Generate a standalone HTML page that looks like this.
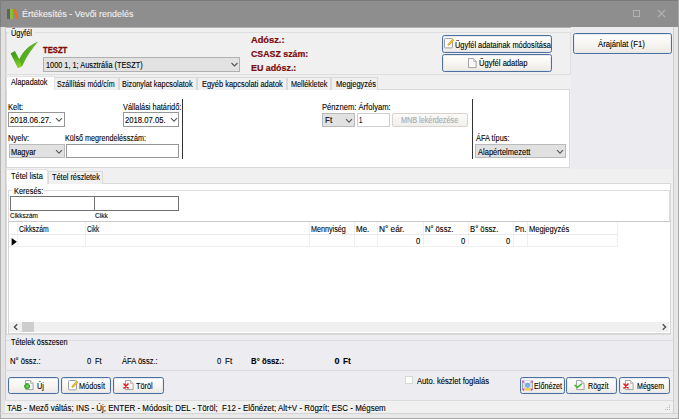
<!DOCTYPE html>
<html><head><meta charset="utf-8"><style>
html,body{margin:0;padding:0;width:679px;height:419px;overflow:hidden;background:#f0f0f0}
.a{position:absolute}
.t{font-family:"Liberation Sans",sans-serif;line-height:20px;white-space:pre;transform-origin:0 0;-webkit-text-stroke:0.1px currentColor}
</style></head><body>
<div class="a" style="left:0px;top:0px;width:679px;height:419px;background:#f0f0f0"></div>
<div class="a" style="left:0px;top:0px;width:679px;height:27px;background:#8e8e8e"></div>
<div class="a" style="left:0px;top:27px;width:679px;height:1px;background:#b4b4b4"></div>
<div class="a" style="left:0px;top:0px;width:679px;height:1px;background:#7a7a7a"></div>
<div class="a" style="left:0px;top:0px;width:1px;height:27px;background:#7e7e7e"></div>
<div class="a" style="left:7.3px;top:9px;width:2.500000000000001px;height:10px;background:#616161"></div>
<div class="a" style="left:10.2px;top:9px;width:2.4000000000000004px;height:10px;background:#86bf3c"></div>
<svg class="a" style="left:0;top:0" width="30" height="27"><polygon points="13.4,9 15.9,9 18.4,19 15.9,19" fill="#f26b1d"/></svg>
<div class="a t" style="left:21.70px;top:3.90px;font-size:9.8px;color:#f2f2f2;transform:scaleX(0.9133);">Értékesítés - Vevői rendelés</div>
<div class="a" style="left:633px;top:10px;width:7px;height:7px;border:1px solid #b2b2b2;box-sizing:border-box"></div>
<svg class="a" style="left:650px;top:3px" width="22" height="22"><path d="M8 7 L15 14 M15 7 L8 14" stroke="#b2b2b2" stroke-width="1.1"/></svg>
<div class="a" style="left:0px;top:27px;width:1px;height:392px;background:#b2b2b2"></div>
<div class="a" style="left:1px;top:27px;width:4px;height:392px;background:#e4e4e4"></div>
<div class="a" style="left:5px;top:27px;width:1px;height:386px;background:#cdcdcd"></div>
<div class="a" style="left:673px;top:27px;width:1px;height:386px;background:#d0d0d0"></div>
<div class="a" style="left:674px;top:27px;width:4px;height:392px;background:#e6e6e6"></div>
<div class="a" style="left:678px;top:0px;width:1px;height:419px;background:#a8a8a8"></div>
<div class="a" style="left:0px;top:413px;width:678px;height:1px;background:#d4d4d4"></div>
<div class="a" style="left:1px;top:414px;width:677px;height:4px;background:#e8e8e8"></div>
<div class="a" style="left:0px;top:418px;width:679px;height:1px;background:#a8a8a8"></div>
<div class="a" style="left:6px;top:335px;width:667px;height:65px;background:#ededf1"></div>
<div class="a" style="left:571px;top:27px;width:102px;height:142px;background:#ececf0"></div>
<div class="a" style="left:6px;top:32px;width:565px;height:43px;border:1px solid #dedede;box-sizing:border-box"></div>
<div class="a" style="left:9px;top:29px;width:26px;height:8px;background:#f0f0f0"></div>
<div class="a t" style="left:11.00px;top:22.95px;font-size:8.5px;color:#000;transform:scaleX(0.8676);">Ügyfél</div>
<svg class="a" style="left:8px;top:38px" width="34" height="34" viewBox="0 0 34 34"><defs><linearGradient id="g1" x1="0" y1="0" x2="0.35" y2="1"><stop offset="0" stop-color="#1f7a12"/><stop offset="0.55" stop-color="#4aa51e"/><stop offset="1" stop-color="#94d62c"/></linearGradient><linearGradient id="g2" x1="0" y1="1" x2="1" y2="0"><stop offset="0" stop-color="#3a9a18"/><stop offset="1" stop-color="#8acb3a"/></linearGradient></defs><path d="M2.6 15.6 L6.9 13 L11.3 21.3 C15 13.5 21 7.5 29.8 3.8 C24.5 10 19 17.5 14 28.5 L9.9 30.3 Z" fill="url(#g1)"/><path d="M11.3 21.3 C15 13.5 21 7.5 29.8 3.8 C24.5 10 19 17.5 14 28.5 Z" fill="url(#g2)" opacity="0.6"/></svg>
<div class="a t" style="left:43.20px;top:39.72px;font-size:8.6px;color:#7e0a0a;font-weight:bold;transform:scaleX(0.8905);-webkit-text-stroke:0.3px #7e0a0a">TESZT</div>
<div class="a" style="left:42.7px;top:56.8px;width:197.60000000000002px;height:15.0px;background:#e2e2e2;border:1px solid #b0b0b0;box-sizing:border-box"></div>
<div class="a t" style="left:45.80px;top:54.95px;font-size:8.5px;color:#000;transform:scaleX(0.8632);">1000 1, 1; Ausztrália (TESZT)</div>
<svg class="a" style="left:229.5px;top:60.8px" width="10" height="8"><path d="M1.5 2 L4.5 5 L7.5 2" stroke="#555" fill="none" stroke-width="1.1"/></svg>
<div class="a t" style="left:250.70px;top:29.98px;font-size:9px;color:#7a0b0b;font-weight:bold;transform:scaleX(1.0308);-webkit-text-stroke:0.2px #7a0b0b">Adósz.:</div>
<div class="a t" style="left:250.70px;top:44.18px;font-size:9px;color:#7a0b0b;font-weight:bold;transform:scaleX(0.9775);-webkit-text-stroke:0.2px #7a0b0b">CSASZ szám:</div>
<div class="a t" style="left:250.70px;top:57.58px;font-size:9px;color:#7a0b0b;font-weight:bold;transform:scaleX(0.9846);-webkit-text-stroke:0.2px #7a0b0b">EU adósz.:</div>
<div class="a" style="left:442.3px;top:35.2px;width:109.49999999999994px;height:17.4px;border:1.4px solid #4b6f9e;border-radius:2.5px;box-sizing:border-box;background:linear-gradient(#ffffff,#f8f6f3 50%,#ede9e4);box-shadow:inset 0 0 0 0.7px #dfe5ec"></div>
<div class="a" style="left:442.3px;top:54.3px;width:109.49999999999994px;height:17.60000000000001px;border:1.4px solid #4b6f9e;border-radius:2.5px;box-sizing:border-box;background:linear-gradient(#ffffff,#f8f6f3 50%,#ede9e4);box-shadow:inset 0 0 0 0.7px #dfe5ec"></div>
<div class="a" style="left:572.8px;top:33px;width:99.10000000000002px;height:21.200000000000003px;border:1.4px solid #4b6f9e;border-radius:2.5px;box-sizing:border-box;background:linear-gradient(#ffffff,#f8f6f3 50%,#ede9e4);box-shadow:inset 0 0 0 0.7px #dfe5ec"></div>
<svg class="a" style="left:443px;top:37.2px" width="12" height="12" viewBox="-1 -1 12 12"><rect x="0.5" y="0.5" width="8" height="9.4" rx="1" fill="#fafafa" stroke="#a0a0a0" stroke-width="1"/><path d="M4.2 5.9 L8.7 1.1 L9.9 2.2 L5.4 7 L4 7.3 Z" fill="#f2c23a" stroke="#c88a10" stroke-width="0.6"/></svg>
<div class="a t" style="left:454.90px;top:34.65px;font-size:8.5px;color:#000;transform:scaleX(0.8736);">Ügyfél adatainak módosítása</div>
<svg class="a" style="left:466.5px;top:57px" width="10.6" height="12.1" viewBox="-1 -1 10.6 12.1"><path d="M0.5 0.5 H5.6 L8.1 3.5 V9.6 H0.5 Z" fill="#f9f9f9" stroke="#a3a3a3" stroke-width="1" stroke-linejoin="round"/><path d="M5.6 0.5 V3.5 H8.1" fill="#e6e6e6" stroke="#b0b0b0" stroke-width="0.8"/></svg>
<div class="a t" style="left:478.80px;top:53.15px;font-size:8.5px;color:#000;transform:scaleX(0.8935);">Ügyfél adatlap</div>
<div class="a t" style="left:598.10px;top:34.15px;font-size:8.5px;color:#000;transform:scaleX(0.9079);">Árajánlat (F1)</div>
<div class="a" style="left:5.5px;top:89px;width:564.0px;height:79px;background:#fff;border:1px solid #d9d9d9;box-sizing:border-box"></div>
<div class="a" style="left:54px;top:77px;width:64.5px;height:12.5px;background:#f0f0f0;border:1px solid #d9d9d9;border-bottom:none;box-sizing:border-box"></div>
<div class="a t" style="left:56.60px;top:73.55px;font-size:8.5px;color:#000;transform:scaleX(0.8362);">Szállítási mód/cím</div>
<div class="a" style="left:118.5px;top:77px;width:78.69999999999999px;height:12.5px;background:#f0f0f0;border:1px solid #d9d9d9;border-bottom:none;box-sizing:border-box"></div>
<div class="a t" style="left:122.40px;top:73.55px;font-size:8.5px;color:#000;transform:scaleX(0.8632);">Bizonylat kapcsolatok</div>
<div class="a" style="left:197.2px;top:77px;width:89.69999999999999px;height:12.5px;background:#f0f0f0;border:1px solid #d9d9d9;border-bottom:none;box-sizing:border-box"></div>
<div class="a t" style="left:201.60px;top:73.55px;font-size:8.5px;color:#000;transform:scaleX(0.8763);">Egyéb kapcsolati adatok</div>
<div class="a" style="left:286.9px;top:77px;width:44.10000000000002px;height:12.5px;background:#f0f0f0;border:1px solid #d9d9d9;border-bottom:none;box-sizing:border-box"></div>
<div class="a t" style="left:291.00px;top:73.55px;font-size:8.5px;color:#000;transform:scaleX(0.8552);">Mellékletek</div>
<div class="a" style="left:331px;top:77px;width:47px;height:12.5px;background:#f0f0f0;border:1px solid #d9d9d9;border-bottom:none;box-sizing:border-box"></div>
<div class="a t" style="left:335.70px;top:73.55px;font-size:8.5px;color:#000;transform:scaleX(0.8802);">Megjegyzés</div>
<div class="a" style="left:5.5px;top:75.7px;width:49.0px;height:14.299999999999997px;background:#fff;border:1px solid #e2e2e2;border-bottom:none;box-sizing:border-box"></div>
<div class="a t" style="left:11.20px;top:72.35px;font-size:8.5px;color:#000;transform:scaleX(0.8571);">Alapadatok</div>
<div class="a t" style="left:8.10px;top:96.55px;font-size:8.5px;color:#000;transform:scaleX(0.8951);">Kelt:</div>
<div class="a" style="left:8.4px;top:112.4px;width:56.4px;height:14.399999999999991px;background:#fff;border:1px solid #969696;box-sizing:border-box"></div>
<div class="a t" style="left:10.00px;top:110.05px;font-size:8.5px;color:#000;transform:scaleX(0.9182);">2018.06.27.</div>
<svg class="a" style="left:55.0px;top:117.4px" width="8" height="6"><path d="M1 1.2 L4 4.2 L7 1.2" stroke="#575757" fill="none" stroke-width="1.05"/></svg>
<div class="a t" style="left:123.00px;top:96.75px;font-size:8.5px;color:#000;transform:scaleX(0.8691);">Vállalási határidő:</div>
<div class="a" style="left:123px;top:112.2px;width:56.30000000000001px;height:14.599999999999994px;background:#fff;border:1px solid #969696;box-sizing:border-box"></div>
<div class="a t" style="left:124.70px;top:109.85px;font-size:8.5px;color:#000;transform:scaleX(0.9048);">2018.07.05.</div>
<svg class="a" style="left:169.5px;top:117.2px" width="8" height="6"><path d="M1 1.2 L4 4.2 L7 1.2" stroke="#575757" fill="none" stroke-width="1.05"/></svg>
<div class="a t" style="left:8.40px;top:127.85px;font-size:8.5px;color:#000;transform:scaleX(0.8945);">Nyelv:</div>
<div class="a" style="left:8.6px;top:144.2px;width:56.199999999999996px;height:14.100000000000023px;background:#e1e1e1;border:1px solid #bababa;box-sizing:border-box"></div>
<div class="a t" style="left:11.00px;top:141.85px;font-size:8.5px;color:#000;transform:scaleX(0.8768);">Magyar</div>
<svg class="a" style="left:55.0px;top:149.2px" width="8" height="6"><path d="M1 1.2 L4 4.2 L7 1.2" stroke="#575757" fill="none" stroke-width="1.05"/></svg>
<div class="a t" style="left:65.30px;top:127.85px;font-size:8.5px;color:#000;transform:scaleX(0.8478);">Külső megrendelésszám:</div>
<div class="a" style="left:66px;top:144px;width:113.30000000000001px;height:14.400000000000006px;background:#fff;border:1px solid #969696;box-sizing:border-box"></div>
<div class="a" style="left:182px;top:98.5px;width:1px;height:60.30000000000001px;background:#333"></div>
<div class="a t" style="left:321.60px;top:96.65px;font-size:8.5px;color:#000;transform:scaleX(0.8980);">Pénznem: Árfolyam:</div>
<div class="a" style="left:322px;top:112.6px;width:32.60000000000002px;height:14.400000000000006px;background:#e1e1e1;border:1px solid #bababa;box-sizing:border-box"></div>
<div class="a t" style="left:324.90px;top:110.25px;font-size:8.5px;color:#000;transform:scaleX(0.9521);">Ft</div>
<svg class="a" style="left:344.8px;top:117.6px" width="8" height="6"><path d="M1 1.2 L4 4.2 L7 1.2" stroke="#575757" fill="none" stroke-width="1.05"/></svg>
<div class="a" style="left:357px;top:112.6px;width:33px;height:14.400000000000006px;background:#fff;border:1px solid #cfcfcf;box-sizing:border-box"></div>
<div class="a t" style="left:358.60px;top:109.85px;font-size:8.5px;color:#000;transform:scaleX(0.7000);">1</div>
<div class="a" style="left:392.4px;top:112.6px;width:75.40000000000003px;height:14.400000000000006px;background:linear-gradient(#fbfaf8,#f1efeb);border:1px solid #d9d5ce;border-radius:2px;box-sizing:border-box"></div>
<div class="a t" style="left:401.00px;top:109.85px;font-size:8.5px;color:#a4a9b3;transform:scaleX(0.8522);">MNB lekérdezése</div>
<div class="a" style="left:471.8px;top:98.5px;width:1.0px;height:60.30000000000001px;background:#333"></div>
<div class="a t" style="left:476.00px;top:128.25px;font-size:8.5px;color:#000;transform:scaleX(0.8648);">ÁFA típus:</div>
<div class="a" style="left:475.2px;top:144.1px;width:90.59999999999997px;height:14.400000000000006px;background:#e1e1e1;border:1px solid #bababa;box-sizing:border-box"></div>
<div class="a t" style="left:477.60px;top:141.75px;font-size:8.5px;color:#000;transform:scaleX(0.8879);">Alapértelmezett</div>
<svg class="a" style="left:556.0px;top:149.1px" width="8" height="6"><path d="M1 1.2 L4 4.2 L7 1.2" stroke="#575757" fill="none" stroke-width="1.05"/></svg>
<div class="a" style="left:5.5px;top:183.4px;width:665.5px;height:151.79999999999998px;background:#fff;border:1px solid #d9d9d9;box-sizing:border-box"></div>
<div class="a" style="left:48px;top:171px;width:55px;height:13px;background:#f0f0f0;border:1px solid #d9d9d9;border-bottom:none;box-sizing:border-box"></div>
<div class="a t" style="left:51.50px;top:167.35px;font-size:8.5px;color:#000;transform:scaleX(0.8658);">Tétel részletek</div>
<div class="a" style="left:5.5px;top:169.3px;width:42.5px;height:15.199999999999989px;background:#fff;border:1px solid #e2e2e2;border-bottom:none;box-sizing:border-box"></div>
<div class="a t" style="left:11.00px;top:166.05px;font-size:8.5px;color:#000;transform:scaleX(0.8732);">Tétel lista</div>
<div class="a" style="left:8px;top:190px;width:662px;height:31px;border:1px solid #dcdcdc;border-bottom:none;box-sizing:border-box"></div>
<div class="a" style="left:12px;top:186px;width:32px;height:8px;background:#fff"></div>
<div class="a t" style="left:13.50px;top:180.65px;font-size:8.5px;color:#000;transform:scaleX(0.8740);">Keresés:</div>
<div class="a" style="left:10px;top:196px;width:85px;height:15px;border:1px solid #727272;box-sizing:border-box;background:#fff"></div>
<div class="a" style="left:94px;top:196px;width:85px;height:15px;border:1px solid #727272;box-sizing:border-box;background:#fff"></div>
<div class="a t" style="left:10.00px;top:205.60px;font-size:7.5px;color:#000;transform:scaleX(0.8557);">Cikkszám</div>
<div class="a t" style="left:94.50px;top:205.60px;font-size:7.5px;color:#000;transform:scaleX(0.8765);">Cikk</div>
<div class="a" style="left:8px;top:221px;width:663px;height:113px;background:#fff;border:1px solid #d6d6d6;border-top-color:#cacaca;box-sizing:border-box"></div>
<div class="a" style="left:17px;top:222px;width:1px;height:25px;background:#efefef"></div>
<div class="a" style="left:85px;top:222px;width:1px;height:25px;background:#efefef"></div>
<div class="a" style="left:309px;top:222px;width:1px;height:25px;background:#efefef"></div>
<div class="a" style="left:354px;top:222px;width:1px;height:25px;background:#efefef"></div>
<div class="a" style="left:377px;top:222px;width:1px;height:25px;background:#efefef"></div>
<div class="a" style="left:423px;top:222px;width:1px;height:25px;background:#efefef"></div>
<div class="a" style="left:468px;top:222px;width:1px;height:25px;background:#efefef"></div>
<div class="a" style="left:513px;top:222px;width:1px;height:25px;background:#efefef"></div>
<div class="a" style="left:527px;top:222px;width:1px;height:25px;background:#efefef"></div>
<div class="a" style="left:617px;top:222px;width:1px;height:25px;background:#efefef"></div>
<div class="a" style="left:9px;top:234px;width:609px;height:1px;background:#ebebeb"></div>
<div class="a" style="left:9px;top:246px;width:609px;height:1px;background:#efefef"></div>
<svg class="a" style="left:11px;top:237px" width="7" height="10"><path d="M0.6 0.9 L5.8 4.8 L0.6 8.7 Z" fill="#000"/></svg>
<div class="a t" style="left:19.30px;top:218.55px;font-size:8.5px;color:#000;transform:scaleX(0.8054);">Cikkszám</div>
<div class="a t" style="left:87.20px;top:218.55px;font-size:8.5px;color:#000;transform:scaleX(0.7409);">Cikk</div>
<div class="a t" style="left:310.70px;top:218.55px;font-size:8.5px;color:#000;transform:scaleX(0.8459);">Mennyiség</div>
<div class="a t" style="left:355.70px;top:218.55px;font-size:8.5px;color:#000;transform:scaleX(0.9415);">Me.</div>
<div class="a t" style="left:378.80px;top:218.55px;font-size:8.5px;color:#000;transform:scaleX(0.9722);">N° eár.</div>
<div class="a t" style="left:424.50px;top:218.55px;font-size:8.5px;color:#000;transform:scaleX(0.8924);">N° össz.</div>
<div class="a t" style="left:469.80px;top:218.55px;font-size:8.5px;color:#000;transform:scaleX(0.9059);">B° össz.</div>
<div class="a t" style="left:514.50px;top:218.55px;font-size:8.5px;color:#000;transform:scaleX(0.8873);">Pn.</div>
<div class="a t" style="left:528.50px;top:218.55px;font-size:8.5px;color:#000;transform:scaleX(0.8868);">Megjegyzés</div>
<div class="a t" style="left:415.50px;top:231.25px;font-size:8.5px;color:#000;transform:scaleX(0.9000);">0</div>
<div class="a t" style="left:460.80px;top:231.25px;font-size:8.5px;color:#000;transform:scaleX(0.9000);">0</div>
<div class="a t" style="left:506.10px;top:231.25px;font-size:8.5px;color:#000;transform:scaleX(0.9000);">0</div>
<div class="a" style="left:9px;top:321.9px;width:660px;height:10.100000000000023px;background:#f0f0f0"></div>
<div class="a" style="left:21.8px;top:322px;width:11.900000000000002px;height:10px;background:#cdcdcd"></div>
<svg class="a" style="left:12px;top:323px" width="8" height="8"><path d="M5.3 1.3 L2.3 4 L5.3 6.7" stroke="#404040" fill="none" stroke-width="1.15"/></svg>
<svg class="a" style="left:660px;top:323px" width="8" height="8"><path d="M2.7 1.3 L5.7 4 L2.7 6.7" stroke="#404040" fill="none" stroke-width="1.15"/></svg>
<div class="a" style="left:6px;top:340px;width:667px;height:1px;background:#dcdce0"></div>
<div class="a t" style="left:11.20px;top:332.05px;font-size:8.5px;color:#000;transform:scaleX(0.8552);">Tételek összesen</div>
<div class="a" style="left:5px;top:370px;width:668px;height:1px;background:#dcdcdc"></div>
<div class="a t" style="left:10.20px;top:350.75px;font-size:8.5px;color:#000;transform:scaleX(0.9011);">N° össz.:</div>
<div class="a t" style="left:87.20px;top:350.75px;font-size:8.5px;color:#000;transform:scaleX(0.9000);">0</div>
<div class="a t" style="left:94.80px;top:350.75px;font-size:8.5px;color:#000;transform:scaleX(0.8789);">Ft</div>
<div class="a t" style="left:122.30px;top:350.75px;font-size:8.5px;color:#000;transform:scaleX(0.8867);">ÁFA össz.:</div>
<div class="a t" style="left:217.00px;top:350.75px;font-size:8.5px;color:#000;transform:scaleX(0.9000);">0</div>
<div class="a t" style="left:225.20px;top:350.75px;font-size:8.5px;color:#000;transform:scaleX(0.9521);">Ft</div>
<div class="a t" style="left:250.50px;top:350.78px;font-size:9px;color:#000;font-weight:bold;transform:scaleX(0.8660);">B° össz.:</div>
<div class="a t" style="left:334.40px;top:350.78px;font-size:9px;color:#000;font-weight:bold;">0</div>
<div class="a t" style="left:343.30px;top:350.78px;font-size:9px;color:#000;font-weight:bold;transform:scaleX(0.9061);">Ft</div>
<div class="a" style="left:8.2px;top:377px;width:51.0px;height:17.30000000000001px;border:1.4px solid #4b6f9e;border-radius:2.5px;box-sizing:border-box;background:linear-gradient(#ffffff,#f8f6f3 50%,#ede9e4);box-shadow:inset 0 0 0 0.7px #dfe5ec"></div>
<div class="a" style="left:61.2px;top:377px;width:50.3px;height:17.30000000000001px;border:1.4px solid #4b6f9e;border-radius:2.5px;box-sizing:border-box;background:linear-gradient(#ffffff,#f8f6f3 50%,#ede9e4);box-shadow:inset 0 0 0 0.7px #dfe5ec"></div>
<div class="a" style="left:113.3px;top:377px;width:50.39999999999999px;height:17.30000000000001px;border:1.4px solid #4b6f9e;border-radius:2.5px;box-sizing:border-box;background:linear-gradient(#ffffff,#f8f6f3 50%,#ede9e4);box-shadow:inset 0 0 0 0.7px #dfe5ec"></div>
<div class="a" style="left:520px;top:377px;width:44.5px;height:17.30000000000001px;border:1.4px solid #4b6f9e;border-radius:2.5px;box-sizing:border-box;background:linear-gradient(#ffffff,#f8f6f3 50%,#ede9e4);box-shadow:inset 0 0 0 0.7px #dfe5ec"></div>
<div class="a" style="left:566.2px;top:377px;width:51.09999999999991px;height:17.30000000000001px;border:1.4px solid #4b6f9e;border-radius:2.5px;box-sizing:border-box;background:linear-gradient(#ffffff,#f8f6f3 50%,#ede9e4);box-shadow:inset 0 0 0 0.7px #dfe5ec"></div>
<div class="a" style="left:619.3px;top:377px;width:50.30000000000007px;height:17.30000000000001px;border:1.4px solid #4b6f9e;border-radius:2.5px;box-sizing:border-box;background:linear-gradient(#ffffff,#f8f6f3 50%,#ede9e4);box-shadow:inset 0 0 0 0.7px #dfe5ec"></div>
<svg class="a" style="left:24.2px;top:379.3px" width="10.6" height="12.1" viewBox="-1 -1 10.6 12.1"><path d="M0.5 0.5 H5.6 L8.1 3.5 V9.6 H0.5 Z" fill="#f9f9f9" stroke="#a3a3a3" stroke-width="1" stroke-linejoin="round"/><path d="M5.6 0.5 V3.5 H8.1" fill="#e6e6e6" stroke="#b0b0b0" stroke-width="0.8"/></svg>
<svg class="a" style="left:23.5px;top:382.90000000000003px" width="6.5" height="6.5" viewBox="0 0 8 8"><path d="M2.6 0.6 H5.4 V2.6 H7.4 V5.4 H5.4 V7.4 H2.6 V5.4 H0.6 V2.6 H2.6 Z" fill="#3cb42a" stroke="#2a9a1c" stroke-width="0.8" stroke-linejoin="round"/><path d="M4 2.2 V5.8 M2.2 4 H5.8" stroke="#8ee070" stroke-width="1"/></svg>
<div class="a t" style="left:36.50px;top:376.25px;font-size:8.5px;color:#000;transform:scaleX(0.8601);">Új</div>
<svg class="a" style="left:66.7px;top:379px" width="12" height="12" viewBox="-1 -1 12 12"><rect x="0.5" y="0.5" width="8" height="9.4" rx="1" fill="#fafafa" stroke="#a0a0a0" stroke-width="1"/><path d="M4.2 5.9 L8.7 1.1 L9.9 2.2 L5.4 7 L4 7.3 Z" fill="#f2c23a" stroke="#c88a10" stroke-width="0.6"/></svg>
<div class="a t" style="left:78.90px;top:376.25px;font-size:8.5px;color:#000;transform:scaleX(0.8583);">Módosít</div>
<svg class="a" style="left:123.8px;top:379.3px" width="10.6" height="12.1" viewBox="-1 -1 10.6 12.1"><path d="M0.5 0.5 H5.6 L8.1 3.5 V9.6 H0.5 Z" fill="#f9f9f9" stroke="#a3a3a3" stroke-width="1" stroke-linejoin="round"/><path d="M5.6 0.5 V3.5 H8.1" fill="#e6e6e6" stroke="#b0b0b0" stroke-width="0.8"/></svg>
<svg class="a" style="left:123.0px;top:382.8px" width="6" height="6" viewBox="0 0 6 6"><path d="M1 1 L5 5 M5 1 L1 5" stroke="#e0151a" stroke-width="1.6" stroke-linecap="round"/></svg>
<div class="a t" style="left:136.30px;top:376.25px;font-size:8.5px;color:#000;transform:scaleX(0.8574);">Töröl</div>
<svg class="a" style="left:522px;top:380px" width="11" height="11" viewBox="0 0 11 11"><rect x="0.5" y="2" width="10" height="7" fill="#dcdce6" stroke="#9a9aa8" stroke-width="0.8"/><rect x="2.5" y="0.5" width="6" height="2.5" fill="#fff" stroke="#bbb" stroke-width="0.6"/><path d="M1 0.3 V2.5 M10 0.3 V2.5 M0.5 9 L2 10.5 M10.5 9 L9 10.5" stroke="#e020e0" stroke-width="1.2"/><rect x="2.5" y="8.2" width="6" height="2.3" fill="#f0d040"/><circle cx="5.5" cy="5.3" r="2.1" fill="#74b4f0" stroke="#4a8ad0" stroke-width="0.5"/></svg>
<div class="a t" style="left:534.00px;top:375.85px;font-size:8.5px;color:#000;transform:scaleX(0.8453);">Előnézet</div>
<svg class="a" style="left:575.2px;top:379.3px" width="10.6" height="12.1" viewBox="-1 -1 10.6 12.1"><path d="M0.5 0.5 H5.6 L8.1 3.5 V9.6 H0.5 Z" fill="#f9f9f9" stroke="#a3a3a3" stroke-width="1" stroke-linejoin="round"/><path d="M5.6 0.5 V3.5 H8.1" fill="#e6e6e6" stroke="#b0b0b0" stroke-width="0.8"/></svg>
<svg class="a" style="left:574px;top:383.3px" width="9" height="8" viewBox="0 0 9 8"><path d="M1 2.3 L3.2 4.4 L7.2 1.3" stroke="#42b832" fill="none" stroke-width="1.5" stroke-linecap="round"/></svg>
<div class="a t" style="left:587.50px;top:375.85px;font-size:8.5px;color:#000;transform:scaleX(0.8371);">Rögzít</div>
<svg class="a" style="left:624.2px;top:379.3px" width="10.6" height="12.1" viewBox="-1 -1 10.6 12.1"><path d="M0.5 0.5 H5.6 L8.1 3.5 V9.6 H0.5 Z" fill="#f9f9f9" stroke="#a3a3a3" stroke-width="1" stroke-linejoin="round"/><path d="M5.6 0.5 V3.5 H8.1" fill="#e6e6e6" stroke="#b0b0b0" stroke-width="0.8"/></svg>
<svg class="a" style="left:623.4px;top:382.8px" width="6" height="6" viewBox="0 0 6 6"><path d="M1 1 L5 5 M5 1 L1 5" stroke="#e0151a" stroke-width="1.6" stroke-linecap="round"/></svg>
<div class="a t" style="left:636.90px;top:375.85px;font-size:8.5px;color:#000;transform:scaleX(0.8305);">Mégsem</div>
<div class="a" style="left:404.5px;top:375.8px;width:8.899999999999977px;height:8.699999999999989px;background:#fff;border:1px solid #d3dcd3;box-sizing:border-box"></div>
<div class="a t" style="left:416.90px;top:371.05px;font-size:8.5px;color:#000;transform:scaleX(0.8967);">Auto. készlet foglalás</div>
<div class="a" style="left:5px;top:400.2px;width:668px;height:12.800000000000011px;background:#f0f0f0;border-top:1px solid #dcdcdc;box-sizing:border-box"></div>
<div class="a t" style="left:7.20px;top:397.61px;font-size:9.5px;color:#000;transform:scaleX(0.8389);">TAB - Mező váltás; INS - Új; ENTER - Módosít; DEL - Töröl;  F12 - Előnézet; Alt+V - Rögzít; ESC - Mégsem</div>
<svg class="a" style="left:664px;top:404px" width="8" height="8"><g fill="#b8b8b8"><rect x="5" y="1" width="1" height="1"/><rect x="3" y="3" width="1" height="1"/><rect x="5" y="3" width="1" height="1"/><rect x="1" y="5" width="1" height="1"/><rect x="3" y="5" width="1" height="1"/><rect x="5" y="5" width="1" height="1"/></g></svg>
</body></html>
